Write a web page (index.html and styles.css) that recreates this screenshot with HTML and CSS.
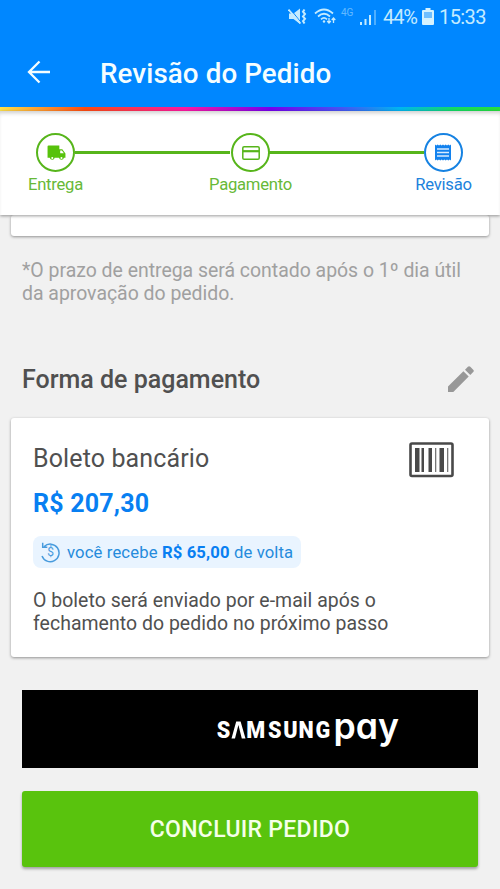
FILE: index.html
```html
<!DOCTYPE html>
<html lang="pt-BR">
<head>
<meta charset="utf-8">
<title>Revisão do Pedido</title>
<link rel="stylesheet" href="styles.css">
</head>
<body>
<header class="top">
  <div class="status">
    <svg class="mute" width="19" height="17" viewBox="0 0 19 17" fill="#c4ebff">
      <path d="M1 5.500h4.500l6.500-5v15.500l-6.500-5H1z"/>
      <path d="M1.500 0l12 15" stroke="#0087ff" stroke-width="1"/>
      <path d="M.5 1.500l12 14" stroke="#c4ebff" stroke-width="1.800"/>
      <path d="M16.500 1.500l-1.500 2.200 2 2.300-2 2.500 2 2.300-2 2.200 1.500 2.500" fill="none" stroke="#c4ebff" stroke-width="2"/>
    </svg>
    <svg class="wifi" width="23" height="17" viewBox="0 0 23 17" fill="none" stroke="#c4ebff" stroke-width="1.700">
      <path d="M1 5.500q9-8 18 0M4 8.500q6-5.500 12 0M7 11.300q3-3 6 0"/>
      <circle cx="10" cy="13.500" r="1.200" fill="#c4ebff" stroke="none"/>
      <path d="M15 10v5M13.200 13l1.800 2 1.800-2M19.500 15v-5M17.700 12l1.800-2 1.800 2" stroke-width="1.300"/>
    </svg>
    <span class="net">4G</span>
    <svg class="signal" width="17" height="16" viewBox="0 0 17 16" fill="#c4ebff">
      <path d="M0 13h2v3H0zM4.500 10h2v6h-2zM9 6h2v10H9z"/><path d="M14 1h2v15h-2z" opacity=".4"/>
    </svg>
    <span class="pct">44%</span>
    <svg class="battery" width="12" height="17" viewBox="0 0 12 17">
      <path d="M3.500 0h5v2H11q1 0 1 1v13q0 1-1 1H1q-1 0-1-1V3q0-1 1-1h2.500z" fill="#d5f2ff"/>
      <path d="M2 4h8v6H2z" fill="#70bfff"/>
    </svg>
    <span class="clock">15:33</span>
  </div>
  <div class="bar">
    <svg class="back" width="24" height="24" viewBox="0 0 24 24" fill="none" stroke="#f4fdff" stroke-width="2.300"><path d="M23 12H2.500M12.500 1.500L2 12l10.500 10.500"/></svg>
    <h1>Revisão do Pedido</h1>
  </div>
  <div class="rainbow"></div>
</header>
<nav class="steps">
  <div class="step">
    <span class="dot"><svg class="truck" width="19" height="16" viewBox="0 0 18 15.200"><path fill="#57c20b" d="M1.500.5h10.200V4H14.500L17.500 8v4.200h-1.400a2.400 2.400 0 0 1-4.700 0H7.300a2.400 2.400 0 0 1-4.700 0H.5V1.500q0-1 1-1z"/><path fill="#fff" d="M12.500 5.200h1.700L16 7.800h-3.500z"/><circle cx="5" cy="12.400" r="1" fill="#fff"/><circle cx="13.700" cy="12.400" r="1" fill="#fff"/></svg></span>
    <span>Entrega</span>
  </div>
  <div class="line"></div>
  <div class="step">
    <span class="dot"><svg width="18" height="14" viewBox="0 0 18 14" fill="none" stroke="#57b51b" stroke-width="1.500"><rect x=".8" y=".8" width="16.400" height="12.400" rx="1.300"/><path d="M1 5.200h16" stroke-width="2.200"/></svg></span>
    <span>Pagamento</span>
  </div>
  <div class="line"></div>
  <div class="step current">
    <span class="dot"><svg width="16" height="17" viewBox="0 0 16 17"><path fill="#1282ee" d="M0 .5l1.300 1L2.700.5 4 1.500l1.300-1 1.400 1 1.300-1 1.300 1 1.400-1 1.300 1 1.300-1 1.400 1L16 .5v16l-1.300-1-1.400 1-1.300-1-1.300 1-1.400-1-1.300 1-1.300-1-1.400 1-1.300-1-1.300 1-1.400-1-1.300 1z"/><path d="M2 5h12M2 8.500h12M2 12h12" stroke="#d9ecff" stroke-width="1.300"/></svg></span>
    <span>Revisão</span>
  </div>
</nav>
<main>
  <div class="card prev"></div>
  <p class="note">*O prazo de entrega será contado após o 1º dia útil<br>da aprovação do pedido.</p>
  <div class="heading">
    <h2>Forma de pagamento</h2>
    <svg width="26" height="26" viewBox="0 0 26 26" fill="#989898"><path d="M0 20.500L15.400 5.200l5.300 5.300L5.300 26H0zM17 3.700l2.900-2.900q1.200-1.200 2.400 0l2.900 2.900q1.200 1.200 0 2.400L22.300 9z"/></svg>
  </div>
  <section class="card payment">
    <div class="method">
      <h3>Boleto bancário</h3>
      <svg width="45" height="36" viewBox="0 0 45 36"><rect x="1.500" y="1.500" width="42" height="32.500" rx="1.500" fill="none" stroke="#494949" stroke-width="2.600"/><path fill="#494949" d="M6 6h4.500v24H6zM12.500 6H15v24h-2.500zM19.500 6h3.500v24h-3.500zM30.500 6H35v24h-4.500z"/><path fill="#777" d="M26 6h1.300v24H26zM38 6h1.300v24H38z"/></svg>
    </div>
    <p class="price">R$ 207,30</p>
    <div class="chip">
      <svg width="20" height="21" viewBox="0 0 20 21" fill="none" stroke="#489bdd" stroke-width="1.500"><path d="M3.200 4.500A8.800 8.800 0 1 1 1 14M1.700.8v4.400h4.600"/><text x="9.800" y="14.300" text-anchor="middle">$</text></svg>
      <span>você recebe <b>R$ 65,00</b> de volta</span>
    </div>
    <p class="info">O boleto será enviado por e-mail após o<br>fechamento do pedido no próximo passo</p>
  </section>
  <div class="samsung">
    <svg width="456" height="78" viewBox="0 0 456 78" fill="#fff">
      <text class="brand" transform="scale(.92 1)" y="48.500" x="211.800">S</text>
      <path d="M209.500 48.500L214.200 31.500h4.400l4.900 17h-3.700l-3.400-13.500-3.400 13.500z"/>
      <text class="brand" transform="scale(.92 1)" y="48.500" x="243.700 267.500 284 300.500 319">MSUNG</text>
      <text class="pay" x="311.500" y="49" textLength="65.500" lengthAdjust="spacingAndGlyphs">pay</text>
    </svg>
  </div>
  <button class="finish">CONCLUIR PEDIDO</button>
</main>
</body>
</html>
```
FILE: styles.css
```css
* { box-sizing: border-box; }
body {
  margin: 0;
  height: 889px;
  overflow: hidden;
  background: #f1f1f1;
  color: #505050;
  font-family: Roboto, sans-serif;
}
h1, h2, h3, p { margin: 0; }
svg { display: block; flex: none; }

.top { background: #0087ff; color: #f4fdff; }
.status {
  display: flex;
  align-items: center;
  height: 33px;
  padding-left: 288px;
  color: #c4ebff;
  font-size: 20px;
}
.wifi { margin-left: 7px; }
.net { width: 15px; margin: -9px 0 0 4px; font-size: 10px; opacity: .5; }
.signal { margin-left: 4px; }
.pct { width: 34px; margin-left: 6px; letter-spacing: -1.1px; }
.battery { margin-left: 5px; }
.clock { margin-left: 5px; letter-spacing: -.6px; }
.bar { display: flex; align-items: center; height: 74px; padding: 6px 0 0 27px; }
.back { margin-top: -2px; }
h1 { margin: 2px 0 0 49px; font-size: 27.780px; font-weight: 500; line-height: 34px; letter-spacing: .09px; }
.rainbow {
  height: 4px;
  background: linear-gradient(90deg, #ffe24a 0, #ff4b10 17%, #ff17a2 37%, #7600ee 54%, #4852f3 68%, #00b6f0 80%, #14dc62 91%, #28df3c);
}

.steps {
  position: relative;
  display: flex;
  height: 104px;
  padding: 22px 26px 0 25px;
  background: #fff;
  color: #67b937;
  box-shadow: 0 1px 3px #0006, inset 0 4px 4px -2px #0003;
  font-size: 16.670px;
  letter-spacing: -.25px;
}
.step { display: flex; flex-direction: column; align-items: center; width: 61px; white-space: nowrap; line-height: 20px; }
.step:nth-child(3) { margin: 0 -1px 0 1px; }
.dot {
  display: flex;
  align-items: center;
  justify-content: center;
  width: 39px;
  height: 39px;
  margin-bottom: 3px;
  border: 2px solid #57b51b;
  border-radius: 50%;
}
.truck { margin-left: 2px; }
.line { flex: 1; height: 3px; margin: 18px -11px 0; background: #57b51b; }
.current { color: #1d82dc; }
.current .dot { margin-right: 1px; border-color: #1682e2; }

.card { margin: 0 11px; background: #fff; border-radius: 3px; box-shadow: 0 1px 3px #0006; }
.prev { height: 21px; }
.note { margin: 23px 22px 0; color: #a0a0a0; font-size: 19.440px; line-height: 23px; letter-spacing: -.01px; white-space: nowrap; }
.heading { display: flex; align-items: center; justify-content: space-between; height: 30px; margin: 59px 26px 0 22px; }
h2 { font-size: 25px; font-weight: 500; }
.payment { height: 239px; margin-top: 24px; padding: 24px 35px 0 22px; }
.method { display: flex; justify-content: space-between; height: 46px; }
h3 { font-size: 25px; font-weight: 400; line-height: 34px; letter-spacing: .12px; }
.price { color: #087ff2; font-size: 25px; font-weight: 700; line-height: 32px; letter-spacing: .2px; }
.chip {
  display: flex;
  align-items: center;
  gap: 6px;
  width: 268px;
  height: 32px;
  margin-top: 16px;
  padding-left: 8px;
  background: #e9f4ff;
  border-radius: 8px;
  color: #258bdc;
  font-size: 16.670px;
  letter-spacing: .13px;
  white-space: nowrap;
}
.chip b { color: #087ff2; }
.chip text { fill: #489bdd; stroke: none; font-size: 12px; }
.info { margin-top: 21px; font-size: 19.440px; line-height: 23px; letter-spacing: .04px; white-space: nowrap; }
.samsung { height: 78px; margin: 33px 22px 0; background: #000; }
.brand { font-family: Roboto, sans-serif; font-size: 23.500px; font-weight: 900; }
.pay { font-family: Inter, sans-serif; font-size: 36px; font-weight: 600; font-feature-settings: "cv11"; }
.finish {
  display: block;
  width: 456px;
  height: 76px;
  margin: 23px 22px 0;
  padding: 1px 0 0;
  border: 0;
  border-radius: 3px;
  background: #59c30d;
  color: #f5ffe9;
  box-shadow: 0 2px 3px #0005;
  font: 500 23px Roboto, sans-serif;
  letter-spacing: .3px;
}
```
